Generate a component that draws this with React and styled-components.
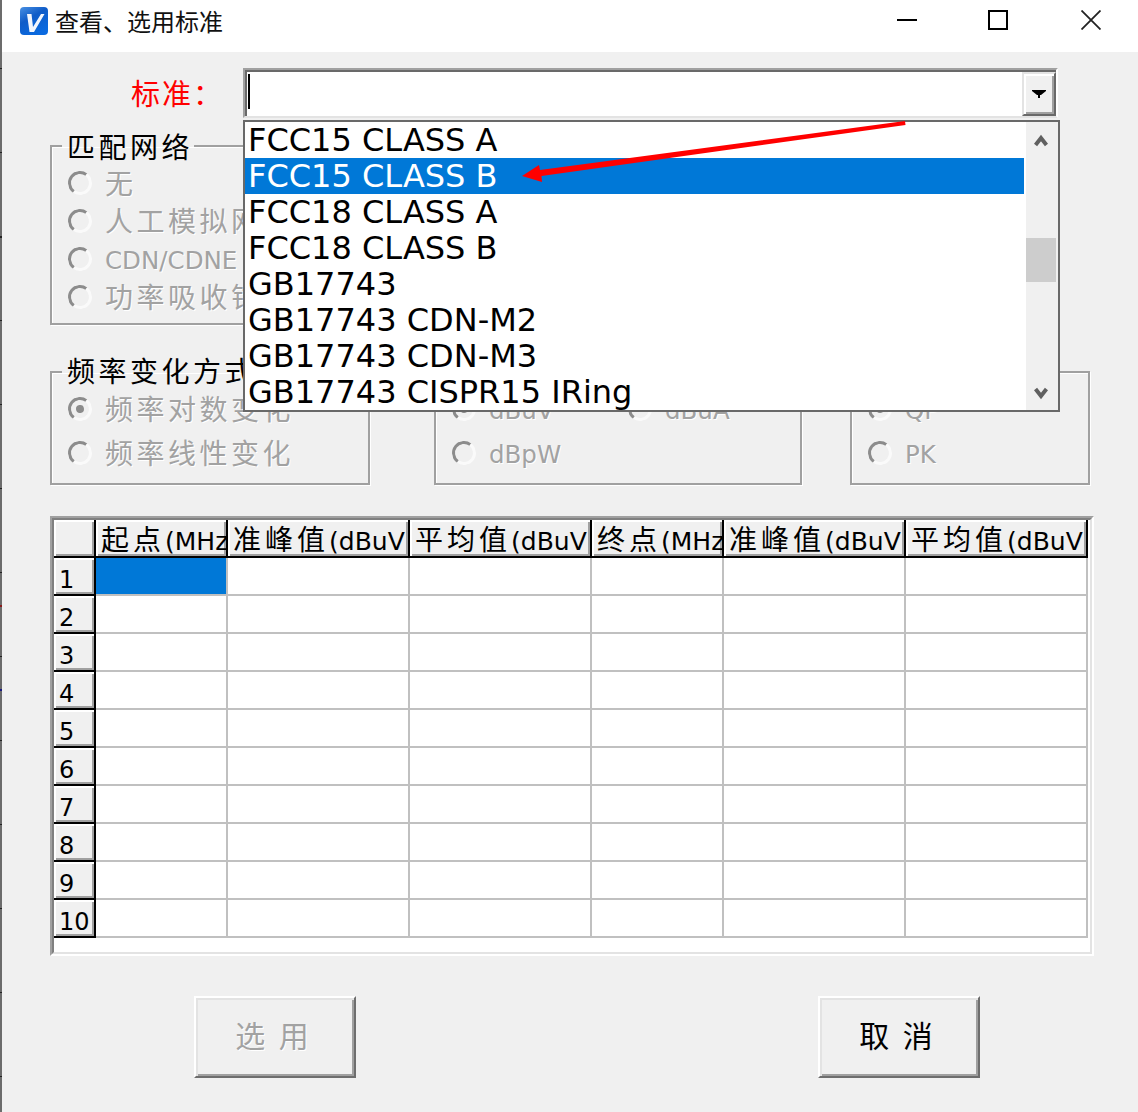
import React from "react";
import styled, { createGlobalStyle } from "styled-components";

const FONT = `"DejaVu Sans", "Noto Sans CJK SC", sans-serif`;
const CJK = `"Noto Sans CJK SC", "DejaVu Sans", sans-serif`;

const GlobalStyle = createGlobalStyle`
  html, body {
    margin: 0;
    padding: 0;
    background: #fff;
  }
  #root {
    width: 1138px;
    height: 1112px;
    overflow: hidden;
  }
`;

const Shell = styled.div`
  display: flex;
  width: 1138px;
  height: 1112px;
  font-family: ${FONT};
  color: #000;
`;

const Edge = styled.div`
  width: 2px;
  flex: none;
  background:
    linear-gradient(#8a1a1a, #8a1a1a) 0 605px / 2px 2px no-repeat,
    linear-gradient(#1a1a80, #1a1a80) 0 689px / 2px 2px no-repeat,
    repeating-linear-gradient(
      to bottom,
      #6c6c6c 0,
      #6c6c6c 68px,
      #222 68px,
      #222 69.5px,
      #6c6c6c 69.5px,
      #6c6c6c 84px
    );
`;

const Window = styled.div`
  flex: 1;
  display: flex;
  flex-direction: column;
  min-width: 0;
`;

const TitleBar = styled.div`
  height: 52px;
  flex: none;
  display: flex;
  align-items: flex-start;
  background: #fff;
  padding-left: 18px;
`;

const AppIcon = styled.svg`
  width: 28px;
  height: 28px;
  margin-top: 7px;
  flex: none;
`;

const Title = styled.div`
  font-family: ${CJK};
  font-size: 24px;
  line-height: 42px;
  margin-left: 7px;
  flex: 1;
  color: #111;
`;

const WinButton = styled.div`
  width: ${(p) => p.$w}px;
  height: 40px;
  display: flex;
  align-items: center;
  justify-content: center;
`;

const Body = styled.div`
  flex: 1;
  background: #f0f0f0;
  padding: 16px 0 0 48px;
`;

const ComboRow = styled.div`
  position: relative;
  display: grid;
  grid-template-columns: 193px 815px;
  height: 50px;
`;

const StandardLabel = styled.div`
  font-family: ${CJK};
  font-size: 29px;
  line-height: 48px;
  letter-spacing: 2px;
  color: #f00;
  padding-left: 81px;
`;

const ComboOuter = styled.div`
  border: 2px solid;
  border-color: #a0a0a0 #fff #e3e3e3 #a0a0a0;
`;

const ComboField = styled.div`
  height: 100%;
  box-sizing: border-box;
  border-top: 2px solid #696969;
  border-left: 2px solid #696969;
  background: #fff;
  display: flex;
  justify-content: space-between;
  padding-left: 1px;
`;

const Caret = styled.div`
  width: 2px;
  height: 35px;
  margin-top: 2px;
  background: #000;
`;

const DropButton = styled.div`
  width: 34px;
  height: 100%;
  box-sizing: border-box;
  background: #f0f0f0;
  border: 2px solid;
  border-color: #e3e3e3 #696969 #696969 #e3e3e3;
  box-shadow: inset 2px 2px 0 #fff, inset -2px -2px 0 #a0a0a0;
  display: flex;
  align-items: center;
  justify-content: center;
`;

const DropList = styled.div`
  position: absolute;
  top: 52px;
  left: 193px;
  width: 817px;
  height: 292px;
  box-sizing: border-box;
  border: 2px solid #696969;
  background: #fff;
  display: flex;
  z-index: 5;
`;

const Items = styled.div`
  flex: 1;
  min-width: 0;
  margin-right: 2px;
`;

const Item = styled.div`
  height: 36px;
  line-height: 37px;
  padding-left: 3px;
  font-size: 32px;
  white-space: nowrap;
  background: ${(p) => (p.$selected ? "#0078d7" : "transparent")};
  color: ${(p) => (p.$selected ? "#fff" : "#000")};
`;

const ScrollBar = styled.div`
  width: 30px;
  padding-right: 2px;
  flex: none;
  background: #f0f0f0;
  display: flex;
  flex-direction: column;
`;

const ScrollArrow = styled.div`
  height: ${(p) => p.$h}px;
  margin-top: ${(p) => (p.$end ? "auto" : "0")};
  flex: none;
  display: flex;
  align-items: center;
  justify-content: center;
`;

const ScrollThumb = styled.div`
  height: 44px;
  margin-top: 80px;
  background: #cdcdcd;
`;

const PointerArrow = styled.svg`
  position: absolute;
  left: 468px;
  top: 50px;
  width: 400px;
  height: 75px;
  z-index: 6;
  pointer-events: none;
`;

const Group = styled.fieldset`
  margin: 0 0 0 ${(p) => p.$ml || 0}px;
  width: ${(p) => p.$w}px;
  box-sizing: border-box;
  min-width: 0;
  padding: 0 0 ${(p) => p.$pb}px 16px;
  border: 2px solid #a0a0a0;
  box-shadow: inset 1px 1px 0 #fff, 1px 1px 0 #fff;
`;

const Legend = styled.legend`
  font-family: ${CJK};
  font-size: 28px;
  line-height: 36px;
  letter-spacing: 3.5px;
  padding: 0 1px ${(p) => (p.$lift ? 4 : 0)}px 5px;
  margin-left: -6px;
  white-space: nowrap;
`;

const RadioList = styled.div`
  display: grid;
  grid-template-columns: ${(p) => p.$cols || "1fr"};
  row-gap: ${(p) => p.$gap}px;
  margin-top: ${(p) => p.$mt || 0}px;
`;

const RadioRow = styled.div`
  height: 38px;
  display: flex;
  align-items: center;
  white-space: nowrap;
`;

const RadioDot = styled.span`
  width: 24px;
  height: 24px;
  box-sizing: border-box;
  flex: none;
  border-radius: 50%;
  border: 3px solid;
  border-color: #8c8c8c #fafafa #fafafa #8c8c8c;
  transform: rotate(-8deg);
  display: flex;
  align-items: center;
  justify-content: center;
  &::after {
    content: "";
    width: 8px;
    height: 8px;
    border-radius: 50%;
    background: ${(p) => (p.$on ? "#8c8c8c" : "transparent")};
  }
`;

const RadioText = styled.span`
  margin-left: 13px;
  color: #a2a2a2;
  text-shadow: 1px 1px 0 #fff;
  font-family: ${(p) => (p.$latin ? FONT : CJK)};
  font-size: ${(p) => (p.$latin ? 24.5 : 28)}px;
  line-height: 34px;
  letter-spacing: ${(p) => (p.$latin ? 0 : 3.5)}px;
  padding: ${(p) => (p.$latin ? "4px 0 0" : "0 0 2px")};
`;

const FirstGroupRow = styled.div`
  margin-top: 10px;
`;

const SecondGroupRow = styled.div`
  display: flex;
  margin-top: 27px;
`;

const TableOuter = styled.div`
  margin-top: 31px;
  width: 1044px;
  height: 440px;
  box-sizing: border-box;
  border: 2px solid;
  border-color: #a0a0a0 #fff #fff #a0a0a0;
`;

const TableInner = styled.div`
  height: 100%;
  box-sizing: border-box;
  background: #fff;
  border: 2px solid;
  border-color: #808080 #e3e3e3 #e3e3e3 #808080;
  display: grid;
  grid-template-columns: 42px 132px 182px 182px 132px 182px 182px;
  grid-auto-rows: 38px;
  align-content: start;
`;

const HeadCell = styled.div`
  box-sizing: border-box;
  background: #f0f0f0;
  border-right: 2px solid #000;
  border-bottom: 2px solid #000;
  box-shadow: inset 2px 2px 0 #fff, inset -2px -2px 0 #a0a0a0;
  padding: ${(p) => (p.$row ? "4px 0 0 5px" : "0 0 0 5px")};
  white-space: nowrap;
  overflow: hidden;
  font-family: ${CJK};
  font-size: 28px;
  line-height: 36px;
  letter-spacing: 4px;
  ${(p) => p.$row && `font-family: ${FONT}; font-size: 24px; letter-spacing: 0;`}
`;

const Unit = styled.span`
  font-family: ${FONT};
  font-size: 25px;
  letter-spacing: 0;
`;

const Cell = styled.div`
  box-sizing: border-box;
  border-right: 2px solid #c0c0c0;
  border-bottom: 2px solid #c0c0c0;
  background: ${(p) => (p.$active ? "#0078d7" : "#fff")};
`;

const ActionRow = styled.div`
  display: flex;
  margin: 40px 0 0 144px;
  gap: 462px;
`;

const ActionButton = styled.div`
  width: 162px;
  height: 82px;
  box-sizing: border-box;
  background: #f0f0f0;
  border: 2px solid;
  border-color: #fff #6e6e6e #6e6e6e #fff;
  box-shadow: inset 2px 2px 0 #e3e3e3, inset -2px -2px 0 #a0a0a0;
  display: flex;
  align-items: center;
  justify-content: center;
  padding: 0 6px 6px 0;
  font-family: ${CJK};
  font-size: 30px;
  word-spacing: 7px;
  color: ${(p) => (p.disabled ? "#a2a2a2" : "#000")};
  text-shadow: ${(p) => (p.disabled ? "1px 1px 0 #fff" : "none")};
`;

const standards = [
  "FCC15 CLASS A",
  "FCC15 CLASS B",
  "FCC18 CLASS A",
  "FCC18 CLASS B",
  "GB17743",
  "GB17743 CDN-M2",
  "GB17743 CDN-M3",
  "GB17743 CISPR15 IRing",
];

const columns = [
  ["起点", "(MHz"],
  ["准峰值", "(dBuV"],
  ["平均值", "(dBuV"],
  ["终点", "(MHz"],
  ["准峰值", "(dBuV"],
  ["平均值", "(dBuV"],
];

const rows = [1, 2, 3, 4, 5, 6, 7, 8, 9, 10];

function Radio({ on, latin, children }) {
  return (
    <RadioRow>
      <RadioDot $on={on} />
      <RadioText $latin={latin}>{children}</RadioText>
    </RadioRow>
  );
}

export default function App() {
  return (
    <>
      <GlobalStyle />
      <Shell>
        <Edge />
        <Window>
          <TitleBar>
            <AppIcon viewBox="0 0 28 28">
              <defs>
                <linearGradient id="appBlue" x1="0" y1="0" x2="0.6" y2="1">
                  <stop offset="0" stopColor="#4a90e2" />
                  <stop offset="0.45" stopColor="#0f5cc8" />
                  <stop offset="1" stopColor="#0a6ae0" />
                </linearGradient>
              </defs>
              <rect x="0" y="0" width="28" height="28" rx="4" fill="url(#appBlue)" />
              <path d="M7 7h4.5l1.5 13L21 7h3.5L14 25H9.5z" fill="#f2f6fd" />
            </AppIcon>
            <Title>查看、选用标准</Title>
            <WinButton $w={90}>
              <svg width="20" height="20" viewBox="0 0 20 20">
                <rect x="0" y="9" width="20" height="2" fill="#000" />
              </svg>
            </WinButton>
            <WinButton $w={92}>
              <svg width="20" height="20" viewBox="0 0 20 20">
                <rect x="1" y="1" width="18" height="18" fill="none" stroke="#000" strokeWidth="2" />
              </svg>
            </WinButton>
            <WinButton $w={94}>
              <svg width="20" height="20" viewBox="0 0 20 20">
                <path d="M0.5 0.5L19.5 19.5M19.5 0.5L0.5 19.5" stroke="#222" strokeWidth="1.8" fill="none" />
              </svg>
            </WinButton>
          </TitleBar>
          <Body>
            <ComboRow>
              <StandardLabel>标准：</StandardLabel>
              <ComboOuter>
                <ComboField>
                  <Caret />
                  <DropButton>
                    <svg width="14" height="8" viewBox="0 0 14 8">
                      <polygon points="0,0 14,0 14,1 9,5 8,5 8,8 6,8 6,5 5,5 0,1" fill="#000" />
                    </svg>
                  </DropButton>
                </ComboField>
              </ComboOuter>
              <DropList>
                <Items>
                  {standards.map((name, i) => (
                    <Item key={name} $selected={i === 1}>
                      {name}
                    </Item>
                  ))}
                </Items>
                <ScrollBar>
                  <ScrollArrow $h={36}>
                    <svg width="14" height="13" viewBox="0 0 14 13">
                      <polyline points="1.5,11 7,4 12.5,11" fill="none" stroke="#606060" strokeWidth="4" />
                    </svg>
                  </ScrollArrow>
                  <ScrollThumb />
                  <ScrollArrow $h={34} $end>
                    <svg width="14" height="13" viewBox="0 0 14 13">
                      <polyline points="1.5,2 7,9 12.5,2" fill="none" stroke="#606060" strokeWidth="4" />
                    </svg>
                  </ScrollArrow>
                </ScrollBar>
              </DropList>
              <PointerArrow viewBox="0 0 400 75">
                <polygon points="387,3 22,52 21,47 4,58 24,64 23.5,58 387.5,7" fill="#f00" />
              </PointerArrow>
            </ComboRow>

            <FirstGroupRow>
              <Group $w={320} $pb={7}>
                <Legend>匹配网络</Legend>
                <RadioList $gap={0}>
                  <Radio>无</Radio>
                  <Radio>人工模拟网络</Radio>
                  <Radio latin>CDN/CDNE</Radio>
                  <Radio>功率吸收钳</Radio>
                </RadioList>
              </Group>
            </FirstGroupRow>

            <SecondGroupRow>
              <Group $w={320} $pb={11}>
                <Legend $lift>频率变化方式</Legend>
                <RadioList $gap={6} $mt={-2}>
                  <Radio on>频率对数变化</Radio>
                  <Radio>频率线性变化</Radio>
                </RadioList>
              </Group>
              <Group $w={368} $ml={64} $pb={11}>
                <Legend $lift>单位</Legend>
                <RadioList $gap={6} $mt={-2} $cols="176px 1fr">
                  <Radio latin on>dBuV</Radio>
                  <Radio latin>dBuA</Radio>
                  <Radio latin>dBpW</Radio>
                </RadioList>
              </Group>
              <Group $w={240} $ml={48} $pb={11}>
                <Legend $lift>检波方式</Legend>
                <RadioList $gap={6} $mt={-2}>
                  <Radio latin on>QP</Radio>
                  <Radio latin>PK</Radio>
                </RadioList>
              </Group>
            </SecondGroupRow>

            <TableOuter>
              <TableInner>
                <HeadCell />
                {columns.map(([name, unit], i) => (
                  <HeadCell key={i}>
                    {name}
                    <Unit>{unit}</Unit>
                  </HeadCell>
                ))}
                {rows.map((n) => (
                  <React.Fragment key={n}>
                    <HeadCell $row>{n}</HeadCell>
                    {columns.map((_, c) => (
                      <Cell key={c} $active={n === 1 && c === 0} />
                    ))}
                  </React.Fragment>
                ))}
              </TableInner>
            </TableOuter>

            <ActionRow>
              <ActionButton disabled>选 用</ActionButton>
              <ActionButton>取 消</ActionButton>
            </ActionRow>
          </Body>
        </Window>
      </Shell>
    </>
  );
}
